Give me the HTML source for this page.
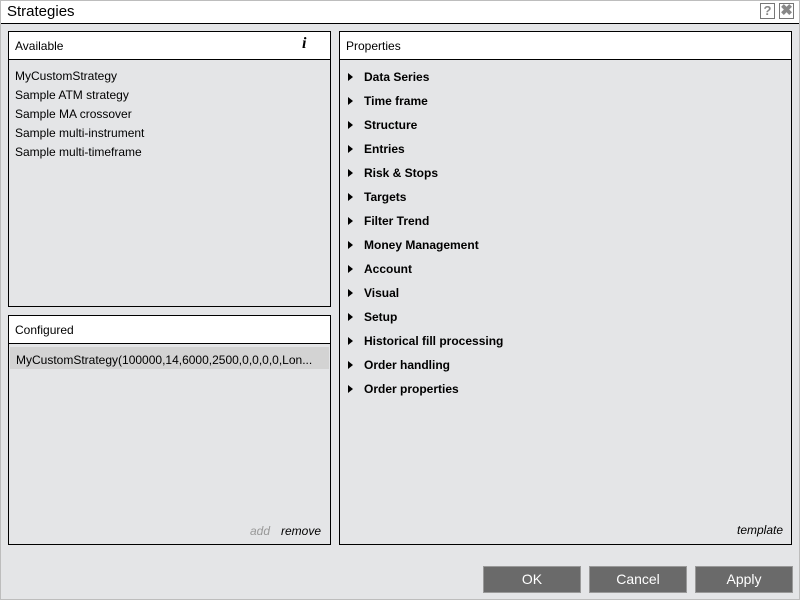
<!DOCTYPE html>
<html><head><style>
*{margin:0;padding:0;box-sizing:border-box}
body{width:800px;height:600px;background:#e4e5e7;font-family:"Liberation Sans",sans-serif;font-size:12px;color:#000;position:relative;overflow:hidden}
.frame{position:absolute;left:0;top:0;width:800px;height:600px;border:1px solid #bdbdbd;pointer-events:none}
.title{position:absolute;left:0;top:0;width:800px;height:24px;background:#fff;border-bottom:1px solid #000;font-size:15px;padding:3px 0 0 7px}
.tb{position:absolute;top:3px;width:15px;height:16px;border:1px solid #777;background:#fff;color:#888;font-size:13px;font-weight:bold;text-align:center;line-height:14px}
.panel{position:absolute;border:1px solid #000;background:#e4e5e7}
.hdr{height:28px;background:#fff;border-bottom:1px solid #000;padding:7px 0 0 6px;font-size:12px}
.item{height:19px;padding:3px 0 0 6px}
.prop{height:24px;padding:4px 0 0 8px;font-weight:bold}
.prop span{display:inline-block;width:0;height:0;border-left:5px solid #000;border-top:4.5px solid transparent;border-bottom:4.5px solid transparent;margin-right:11px}
.btn{position:absolute;top:566px;width:98px;height:27px;background:#6a6a6a;border:1px solid #999;color:#fff;font-size:14px;text-align:center;line-height:25px}
i.s{position:absolute;font-style:italic}
</style></head><body>
<div class="title">Strategies</div>
<div class="tb" style="left:760px">?</div>
<div class="tb" style="left:779px;font-size:15px">✖</div>

<div class="panel" style="left:8px;top:31px;width:323px;height:276px">
<div class="hdr">Available<span style="position:absolute;left:293px;top:3px;font-family:'Liberation Serif',serif;font-style:italic;font-weight:bold;font-size:16px">i</span></div>
<div style="height:6px"></div>
<div class="item">MyCustomStrategy</div>
<div class="item">Sample ATM strategy</div>
<div class="item">Sample MA crossover</div>
<div class="item">Sample multi-instrument</div>
<div class="item">Sample multi-timeframe</div>
</div>

<div class="panel" style="left:8px;top:315px;width:323px;height:230px">
<div class="hdr">Configured</div>
<div style="height:3px"></div>
<div class="item" style="background:#d3d3d3;height:22px;padding-top:6px;margin:0 1px">MyCustomStrategy(100000,14,6000,2500,0,0,0,0,Lon...</div>
<i class="s" style="left:241px;top:208px;color:#999">add</i>
<i class="s" style="left:272px;top:208px">remove</i>
</div>

<div class="panel" style="left:339px;top:31px;width:453px;height:514px">
<div class="hdr">Properties</div>
<div style="height:6px"></div>
<div class="prop"><span></span>Data Series</div>
<div class="prop"><span></span>Time frame</div>
<div class="prop"><span></span>Structure</div>
<div class="prop"><span></span>Entries</div>
<div class="prop"><span></span>Risk &amp; Stops</div>
<div class="prop"><span></span>Targets</div>
<div class="prop"><span></span>Filter Trend</div>
<div class="prop"><span></span>Money Management</div>
<div class="prop"><span></span>Account</div>
<div class="prop"><span></span>Visual</div>
<div class="prop"><span></span>Setup</div>
<div class="prop"><span></span>Historical fill processing</div>
<div class="prop"><span></span>Order handling</div>
<div class="prop"><span></span>Order properties</div>
<i class="s" style="left:397px;top:491px">template</i>
</div>

<div class="btn" style="left:483px">OK</div>
<div class="btn" style="left:589px">Cancel</div>
<div class="btn" style="left:695px">Apply</div>
<div class="frame"></div>
</body></html>
